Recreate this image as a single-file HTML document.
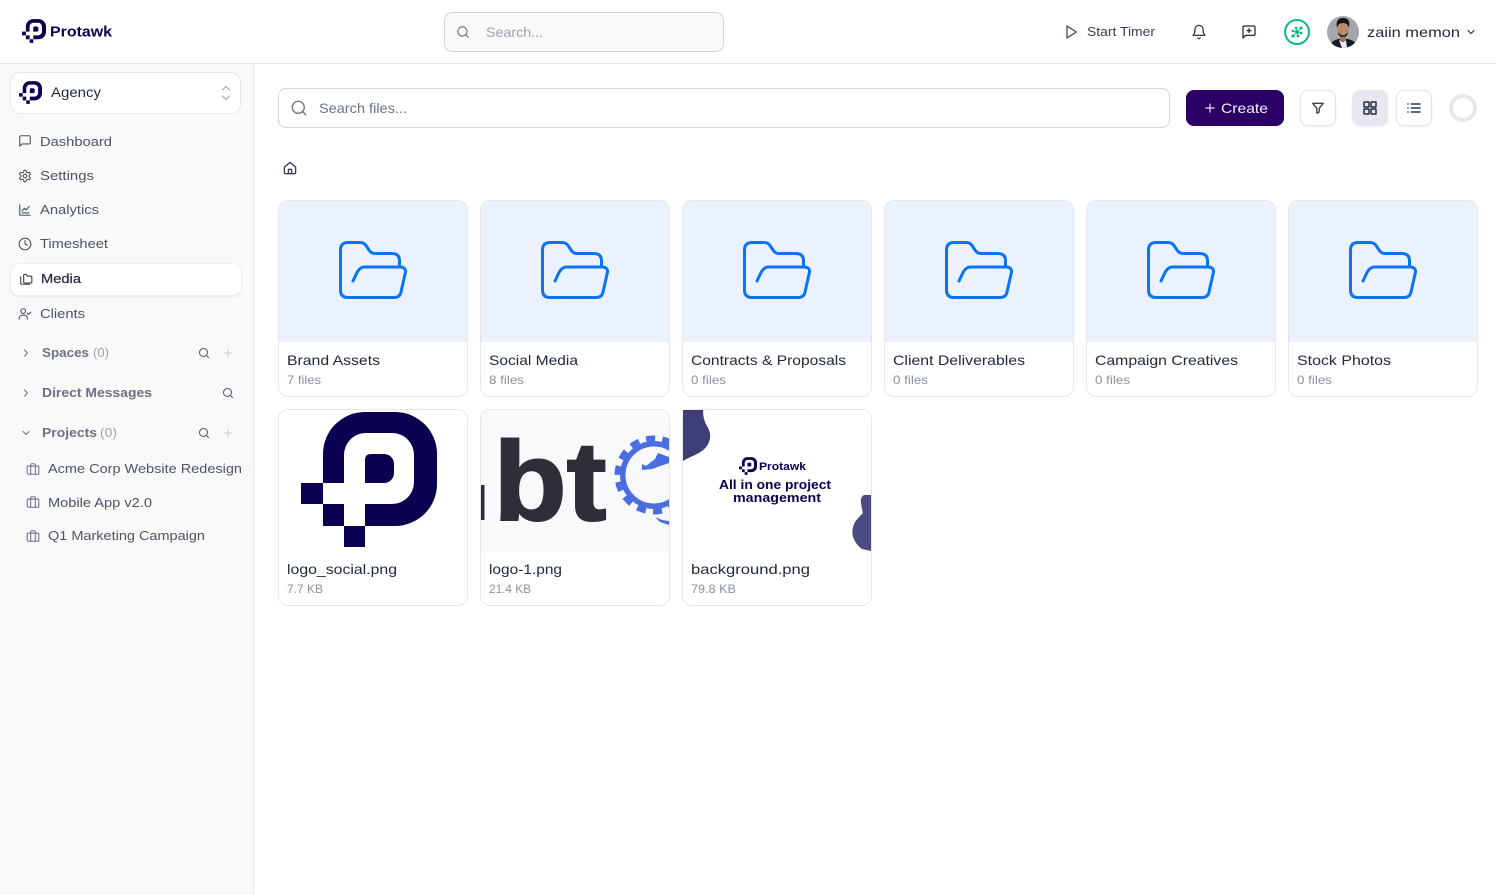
<!DOCTYPE html>
<html lang="en">
<head>
<meta charset="utf-8">
<title>Protawk Media</title>
<style>
*{box-sizing:border-box}
html,body{margin:0;padding:0;width:1496px;height:895px;overflow:hidden;background:#fff;font-family:"Liberation Sans",sans-serif}
.b{position:absolute}
#top{left:0;top:0;width:1496px;height:64px;background:#fff;border-bottom:1px solid #e5e7eb}
#side{left:0;top:64px;width:254px;height:831px;background:#f9f9fa;border-right:1px solid #e5e7eb}
#ts{left:444px;top:12px;width:280px;height:40px;background:#f9f9fa;border:1px solid #d1d5db;border-radius:8px}
#ag{left:10px;top:72px;width:231px;height:42px;background:#fff;border:1px solid #e5e7eb;border-radius:10px}
#med{left:11px;top:264px;width:230px;height:31px;background:#fff;border-radius:8px;box-shadow:0 0 1px 1px #eceef1,0 1px 3px rgba(0,0,0,.12)}
#ms{left:278px;top:88px;width:892px;height:40px;background:#fff;border:1px solid #d1d5db;border-radius:8px}
#cr{left:1186px;top:90px;width:98px;height:36px;background:#2a0066;border-radius:8px}
.ib{top:90px;width:36px;height:36px;background:#fff;border:1px solid #dfe6ef;border-radius:8px;box-shadow:0 1px 2px rgba(0,0,0,.06)}
.card{width:190px;height:197px;background:#fff;border:1px solid #e5e7eb;border-radius:10px;overflow:hidden}
.th{height:141px;background:#ebf2fd}
.th.w{background:#fff}
.th.g{background:#f8f9fb}
svg#o{position:absolute;left:0;top:0}
text{font-family:"Liberation Sans",sans-serif}
.s{fill:none;stroke-linecap:round;stroke-linejoin:round}
</style>
</head>
<body>
<div class="b" id="top"></div>
<div class="b" id="side"></div>
<div class="b" id="ts"></div>
<div class="b" id="ag"></div>
<div class="b" id="med"></div>
<div class="b" id="ms"></div>
<div class="b" id="cr"></div>
<div class="b ib" style="left:1300px"></div>
<div class="b ib" style="left:1352px;background:#e8e6f1;border-color:#e8e6f1"></div>
<div class="b ib" style="left:1396px"></div>

<div class="b card" style="left:278px;top:200px"><div class="th"></div></div>
<div class="b card" style="left:480px;top:200px"><div class="th"></div></div>
<div class="b card" style="left:682px;top:200px"><div class="th"></div></div>
<div class="b card" style="left:884px;top:200px"><div class="th"></div></div>
<div class="b card" style="left:1086px;top:200px"><div class="th"></div></div>
<div class="b card" style="left:1288px;top:200px"><div class="th"></div></div>
<div class="b card" style="left:278px;top:409px"><div class="th w"></div></div>
<div class="b card" style="left:480px;top:409px"><div class="th g"></div></div>
<div class="b card" style="left:682px;top:409px"><div class="th w"></div></div>

<svg id="o" width="1496" height="895" viewBox="0 0 1496 895" xmlns="http://www.w3.org/2000/svg">
<defs>
<symbol id="logo" viewBox="0 0 136 135">
<path fill="#0a0150" d="M22 71V42A42 42 0 0 1 64 0H94A42 42 0 0 1 136 42V72A42 42 0 0 1 94 114H64V92H91A22 22 0 0 0 113 70V43A22 22 0 0 0 91 21H65A22 22 0 0 0 43 43V71ZM64 48Q64 42 70 42H83A10 10 0 0 1 93 52V61A10 10 0 0 1 83 71H64ZM0 71H22V92H0ZM22 92H43V114H22ZM43 114H64V135H43Z"/>
</symbol>
<symbol id="folder" viewBox="0 0 76 66">
<path class="s" stroke="#0b74f5" stroke-width="3" d="M16 42L20 33.500Q23 28 27.500 28H63.500Q69 28.500 68.500 33L64 53Q63 58.500 57 58.500H11Q3.500 58.500 3.500 51V11Q3.500 3.500 11 3.500H23Q27 3.500 29 6.500L32 11Q34 14.500 38 14.500H55Q62.500 14.500 62.500 22V28"/>
</symbol>
<symbol id="i-search" viewBox="0 0 24 24"><g class="s"><circle cx="11" cy="11" r="8"/><path d="M21 21l-4.3-4.3"/></g></symbol>
<symbol id="i-plus" viewBox="0 0 24 24"><path class="s" d="M5 12h14M12 5v14"/></symbol>
<symbol id="i-right" viewBox="0 0 24 24"><path class="s" d="M9 18l6-6-6-6"/></symbol>
<symbol id="i-down" viewBox="0 0 24 24"><path class="s" d="M6 9l6 6 6-6"/></symbol>
<symbol id="i-msg" viewBox="0 0 24 24"><path class="s" d="M21 15a2 2 0 0 1-2 2H7l-4 4V5a2 2 0 0 1 2-2h14a2 2 0 0 1 2 2z"/></symbol>
<symbol id="i-msgp" viewBox="0 0 24 24"><path class="s" d="M21 15a2 2 0 0 1-2 2H7l-4 4V5a2 2 0 0 1 2-2h14a2 2 0 0 1 2 2zM12 7v6M9 10h6"/></symbol>
<symbol id="i-gear" viewBox="0 0 24 24"><g class="s"><path d="M12.22 2h-.44a2 2 0 0 0-2 2v.18a2 2 0 0 1-1 1.73l-.43.25a2 2 0 0 1-2 0l-.15-.08a2 2 0 0 0-2.73.73l-.22.38a2 2 0 0 0 .73 2.73l.15.1a2 2 0 0 1 1 1.72v.51a2 2 0 0 1-1 1.74l-.15.09a2 2 0 0 0-.73 2.73l.22.38a2 2 0 0 0 2.73.73l.15-.08a2 2 0 0 1 2 0l.43.25a2 2 0 0 1 1 1.73V20a2 2 0 0 0 2 2h.44a2 2 0 0 0 2-2v-.18a2 2 0 0 1 1-1.73l.43-.25a2 2 0 0 1 2 0l.15.08a2 2 0 0 0 2.73-.73l.22-.39a2 2 0 0 0-.73-2.73l-.15-.08a2 2 0 0 1-1-1.74v-.5a2 2 0 0 1 1-1.74l.15-.09a2 2 0 0 0 .73-2.73l-.22-.38a2 2 0 0 0-2.73-.73l-.15.08a2 2 0 0 1-2 0l-.43-.25a2 2 0 0 1-1-1.73V4a2 2 0 0 0-2-2z"/><circle cx="12" cy="12" r="3"/></g></symbol>
<symbol id="i-chart" viewBox="0 0 24 24"><path class="s" d="M3 3v18h18M7 14l4-5 3 3 5-6M7 17h12"/></symbol>
<symbol id="i-clock" viewBox="0 0 24 24"><g class="s"><circle cx="12" cy="12" r="10"/><path d="M12 6v6l4 2"/></g></symbol>
<symbol id="i-folders" viewBox="0 0 24 24"><path class="s" d="M8 17a2 2 0 0 0 2 2h10a2 2 0 0 0 2-2V9a2 2 0 0 0-2-2h-5.5l-1.7-2.3A2 2 0 0 0 11.2 4H10a2 2 0 0 0-2 2zM3 8v11a2 2 0 0 0 2 2h13"/></symbol>
<symbol id="i-ucheck" viewBox="0 0 24 24"><g class="s"><circle cx="9" cy="7" r="4"/><path d="M2 21v-2a5 5 0 0 1 5-5h4a5 5 0 0 1 5 5v2M16 11l2 2 4-4"/></g></symbol>
<symbol id="i-brief" viewBox="0 0 24 24"><g class="s"><rect x="2" y="7" width="20" height="14" rx="2"/><path d="M16 21V5a2 2 0 0 0-2-2h-4a2 2 0 0 0-2 2v16"/></g></symbol>
<symbol id="i-play" viewBox="0 0 24 24"><path class="s" d="M6 3l14 9-14 9z"/></symbol>
<symbol id="i-bell" viewBox="0 0 24 24"><path class="s" d="M6 8a6 6 0 0 1 12 0c0 7 3 9 3 9H3s3-2 3-9M10.3 21a1.94 1.94 0 0 0 3.4 0"/></symbol>
<symbol id="i-home" viewBox="0 0 24 24"><path class="s" d="M3 10.5L12 3l9 7.5V19a2 2 0 0 1-2 2H5a2 2 0 0 1-2-2zM9.5 21v-6a1 1 0 0 1 1-1h3a1 1 0 0 1 1 1v6"/></symbol>
<symbol id="i-funnel" viewBox="0 0 24 24"><path class="s" d="M3 4h18l-7 8.5V19l-4 2v-8.5z"/></symbol>
<symbol id="i-grid" viewBox="0 0 24 24"><g class="s"><rect x="3" y="3" width="7.5" height="7.5" rx="1"/><rect x="13.5" y="3" width="7.5" height="7.5" rx="1"/><rect x="3" y="13.5" width="7.5" height="7.5" rx="1"/><rect x="13.5" y="13.5" width="7.5" height="7.5" rx="1"/></g></symbol>
<symbol id="i-list" viewBox="0 0 24 24"><path class="s" d="M8 6h13M8 12h13M8 18h13M3 6h.01M3 12h.01M3 18h.01"/></symbol>
<clipPath id="c2"><rect x="481" y="410" width="188" height="141"/></clipPath>
<clipPath id="cav"><circle cx="1343" cy="32" r="16"/></clipPath>
</defs>

<!-- header -->
<use href="#logo" x="22" y="19" width="24" height="24"/>
<text x="50" y="36.5" font-size="15" font-weight="700" fill="#0a0150" textLength="62" lengthAdjust="spacingAndGlyphs">Protawk</text>
<use href="#i-search" x="456" y="25" width="14" height="14" stroke="#6b7280" stroke-width="2"/>
<text x="486" y="37" font-size="14" fill="#9ca3af" textLength="57" lengthAdjust="spacingAndGlyphs">Search...</text>
<use href="#i-play" x="1063" y="24" width="16" height="16" stroke="#374151" stroke-width="1.8"/>
<text x="1087" y="36" font-size="12.5" fill="#374151" textLength="68" lengthAdjust="spacingAndGlyphs">Start Timer</text>
<use href="#i-bell" x="1191" y="24" width="16" height="16" stroke="#1f2937" stroke-width="1.8"/>
<use href="#i-msgp" x="1241" y="24" width="16" height="16" stroke="#1f2937" stroke-width="1.9"/>
<circle cx="1297" cy="32" r="12" fill="#fff" stroke="#10b981" stroke-width="2"/>
<g fill="#10b981" stroke="#10b981" stroke-width=".8"><path d="M1293 36L1297 32L1301 28M1293 31L1297 32L1298 36M1296 28L1297 32L1301 33" fill="none"/><circle cx="1297" cy="32" r="1.600"/><circle cx="1301" cy="28" r="1.200"/><circle cx="1293" cy="36" r="1.200"/><circle cx="1301" cy="33" r="1"/><circle cx="1293" cy="31" r="1"/><circle cx="1296" cy="28" r="1"/><circle cx="1298" cy="36" r="1"/></g>
<g clip-path="url(#cav)">
<rect x="1327" y="16" width="32" height="32" fill="#a3a7ab"/>
<path d="M1329 48Q1331 40 1339 39L1347 39Q1356 40 1358 48Z" fill="#141c2b"/>
<path d="M1339 40L1342 48H1347L1346 40L1343 42Z" fill="#ececec"/>
<rect x="1340" y="33" width="6" height="8" fill="#a57657"/>
<ellipse cx="1343" cy="29" rx="5.600" ry="7" fill="#bb8a69"/>
<path d="M1337 28Q1335 18 1343 18Q1351 18 1349 28Q1348 23 1343 23Q1338 23 1337 28Z" fill="#17151a"/>
<path d="M1338 32Q1343 38 1348 32Q1348 37 1343 37Q1338 37 1338 32Z" fill="#3b2d28"/>
</g>
<text x="1367" y="37" font-size="14" fill="#1f2937" textLength="93" lengthAdjust="spacingAndGlyphs">zaiin memon</text>
<use href="#i-down" x="1465" y="26" width="12" height="12" stroke="#1f2937" stroke-width="2.2"/>

<!-- sidebar -->
<use href="#logo" x="19" y="81" width="23" height="23"/>
<text x="51" y="97" font-size="13.5" fill="#1f2937" textLength="50" lengthAdjust="spacingAndGlyphs">Agency</text>
<path class="s" stroke="#9ca3af" stroke-width="1.1" d="M222.500 90L226 86.500L229.500 90M222.500 96L226 99.500L229.500 96"/>

<g stroke="#4b5563" stroke-width="1.9">
<use href="#i-msg" x="18" y="134" width="14" height="14"/>
<use href="#i-gear" x="18" y="169" width="14" height="14"/>
<use href="#i-chart" x="18" y="203" width="14" height="14"/>
<use href="#i-clock" x="18" y="237" width="14" height="14"/>
<use href="#i-ucheck" x="18" y="307" width="14" height="14"/>
</g>
<use href="#i-folders" x="19" y="272" width="14" height="14" stroke="#374151" stroke-width="1.9"/>

<g font-size="13" fill="#4b5563">
<text x="40" y="146" textLength="72" lengthAdjust="spacingAndGlyphs">Dashboard</text>
<text x="40" y="180" textLength="54" lengthAdjust="spacingAndGlyphs">Settings</text>
<text x="40" y="214" textLength="59" lengthAdjust="spacingAndGlyphs">Analytics</text>
<text x="40" y="248" textLength="68" lengthAdjust="spacingAndGlyphs">Timesheet</text>
<text x="40" y="318" textLength="45" lengthAdjust="spacingAndGlyphs">Clients</text>
</g>
<text x="41" y="283" font-size="13" fill="#1f2937" stroke="#1f2937" stroke-width=".2" textLength="40" lengthAdjust="spacingAndGlyphs">Media</text>

<use href="#i-right" x="20" y="347" width="12" height="12" stroke="#6b7280" stroke-width="2"/>
<text x="42" y="357" font-size="13" font-weight="700" fill="#6b7280" textLength="47" lengthAdjust="spacingAndGlyphs">Spaces</text>
<text x="93" y="357" font-size="13" fill="#9ca3af" textLength="16" lengthAdjust="spacingAndGlyphs">(0)</text>
<use href="#i-search" x="198" y="347" width="12" height="12" stroke="#4b5563" stroke-width="2"/>
<use href="#i-plus" x="222" y="347" width="12" height="12" stroke="#c4c8ce" stroke-width="2"/>

<use href="#i-right" x="20" y="387" width="12" height="12" stroke="#6b7280" stroke-width="2"/>
<text x="42" y="397" font-size="13" font-weight="700" fill="#6b7280" textLength="110" lengthAdjust="spacingAndGlyphs">Direct Messages</text>
<use href="#i-search" x="222" y="387" width="12" height="12" stroke="#4b5563" stroke-width="2"/>

<use href="#i-down" x="20" y="427" width="12" height="12" stroke="#6b7280" stroke-width="2"/>
<text x="42" y="437" font-size="13" font-weight="700" fill="#6b7280" textLength="55" lengthAdjust="spacingAndGlyphs">Projects</text>
<text x="100" y="437" font-size="13" fill="#9ca3af" textLength="17" lengthAdjust="spacingAndGlyphs">(0)</text>
<use href="#i-search" x="198" y="427" width="12" height="12" stroke="#4b5563" stroke-width="2"/>
<use href="#i-plus" x="222" y="427" width="12" height="12" stroke="#c4c8ce" stroke-width="2"/>

<g stroke="#6b7280" stroke-width="1.8">
<use href="#i-brief" x="26" y="462" width="14" height="14"/>
<use href="#i-brief" x="26" y="495" width="14" height="14"/>
<use href="#i-brief" x="26" y="529" width="14" height="14"/>
</g>
<g font-size="13" fill="#4b5563">
<text x="48" y="473" textLength="194" lengthAdjust="spacingAndGlyphs">Acme Corp Website Redesign</text>
<text x="48" y="507" textLength="104" lengthAdjust="spacingAndGlyphs">Mobile App v2.0</text>
<text x="48" y="540" textLength="157" lengthAdjust="spacingAndGlyphs">Q1 Marketing Campaign</text>
</g>

<!-- toolbar -->
<use href="#i-search" x="290" y="99" width="18" height="18" stroke="#6b7280" stroke-width="1.8"/>
<text x="319" y="113" font-size="14" fill="#6b7280" textLength="88" lengthAdjust="spacingAndGlyphs">Search files...</text>
<use href="#i-plus" x="1203" y="101" width="14" height="14" stroke="#e5e1f0" stroke-width="2"/>
<text x="1221" y="113" font-size="14" fill="#f3f0fa" textLength="47" lengthAdjust="spacingAndGlyphs">Create</text>
<use href="#i-funnel" x="1311" y="101" width="14" height="14" stroke="#374151" stroke-width="2.300"/>
<use href="#i-grid" x="1362" y="100" width="16" height="16" stroke="#374151" stroke-width="2.500"/>
<use href="#i-list" x="1406" y="100" width="16" height="16" stroke="#4b5563" stroke-width="2.500"/>
<circle cx="1463" cy="108" r="12" fill="#fff" stroke="#e5e7eb" stroke-width="4"/>
<use href="#i-home" x="282.500" y="160.500" width="15" height="15" stroke="#374151" stroke-width="2.200"/>

<!-- folders -->
<use href="#folder" x="337" y="239" width="76" height="66"/>
<use href="#folder" x="539" y="239" width="76" height="66"/>
<use href="#folder" x="741" y="239" width="76" height="66"/>
<use href="#folder" x="943" y="239" width="76" height="66"/>
<use href="#folder" x="1145" y="239" width="76" height="66"/>
<use href="#folder" x="1347" y="239" width="76" height="66"/>

<g font-size="14" fill="#1f2937">
<text x="287" y="365" textLength="93" lengthAdjust="spacingAndGlyphs">Brand Assets</text>
<text x="489" y="365" textLength="89" lengthAdjust="spacingAndGlyphs">Social Media</text>
<text x="691" y="365" textLength="155" lengthAdjust="spacingAndGlyphs">Contracts &amp; Proposals</text>
<text x="893" y="365" textLength="132" lengthAdjust="spacingAndGlyphs">Client Deliverables</text>
<text x="1095" y="365" textLength="143" lengthAdjust="spacingAndGlyphs">Campaign Creatives</text>
<text x="1297" y="365" textLength="94" lengthAdjust="spacingAndGlyphs">Stock Photos</text>
<text x="287" y="574" textLength="110" lengthAdjust="spacingAndGlyphs">logo_social.png</text>
<text x="489" y="574" textLength="73" lengthAdjust="spacingAndGlyphs">logo-1.png</text>
<text x="691" y="574" textLength="119" lengthAdjust="spacingAndGlyphs">background.png</text>
</g>
<g font-size="12" fill="#8b919c">
<text x="287" y="384" textLength="34" lengthAdjust="spacingAndGlyphs">7 files</text>
<text x="489" y="384" textLength="35" lengthAdjust="spacingAndGlyphs">8 files</text>
<text x="691" y="384" textLength="35" lengthAdjust="spacingAndGlyphs">0 files</text>
<text x="893" y="384" textLength="35" lengthAdjust="spacingAndGlyphs">0 files</text>
<text x="1095" y="384" textLength="35" lengthAdjust="spacingAndGlyphs">0 files</text>
<text x="1297" y="384" textLength="35" lengthAdjust="spacingAndGlyphs">0 files</text>
<text x="287" y="593" textLength="36" lengthAdjust="spacingAndGlyphs">7.7 KB</text>
<text x="489" y="593" textLength="42" lengthAdjust="spacingAndGlyphs">21.4 KB</text>
<text x="691" y="593" textLength="45" lengthAdjust="spacingAndGlyphs">79.8 KB</text>
</g>

<!-- logo_social thumbnail -->
<use href="#logo" x="301" y="412" width="136" height="135"/>

<!-- logo-1 thumbnail -->
<g clip-path="url(#c2)">
<rect x="480" y="485" width="4.500" height="35" fill="#2f2e38"/>
<text x="493.500" y="520" font-size="112" font-weight="700" fill="#2f2e38" stroke="#2f2e38" stroke-width="2" textLength="113" lengthAdjust="spacingAndGlyphs">bt</text>
<circle cx="654" cy="475" r="31.250" fill="none" stroke="#4a6ee0" stroke-width="5.500"/>
<circle cx="654" cy="475" r="36" fill="none" stroke="#4a6ee0" stroke-width="7" stroke-dasharray="9 7.150"/>
<path fill="#4a6ee0" d="M642 464L646 466L655 459L658 453L669 457V463L652 469L642 470Z"/>
<path fill="#4a6ee0" d="M655 517L662 520L669 521V525L660 522Z"/>
</g>

<!-- background thumbnail -->
<path fill="#3f3d78" d="M683 410H703Q703 420 707 426Q712 434 709 442Q706 450 695 455Q688 458 683 461Z"/>
<path fill="#4b4a85" d="M871 495H864Q860 497 861 503Q862 510 863 513Q858 518 855 522Q851 530 853 537Q856 545 862 549L871 551Z"/>
<use href="#logo" x="739" y="457" width="18" height="18"/>
<text x="759" y="470" font-size="11" font-weight="700" fill="#0a0150" textLength="47" lengthAdjust="spacingAndGlyphs">Protawk</text>
<text x="719" y="489" font-size="12.500" font-weight="700" fill="#0a0150" textLength="112" lengthAdjust="spacingAndGlyphs">All in one project</text>
<text x="733" y="502" font-size="12.500" font-weight="700" fill="#0a0150" textLength="88" lengthAdjust="spacingAndGlyphs">management</text>
</svg>
</body>
</html>
